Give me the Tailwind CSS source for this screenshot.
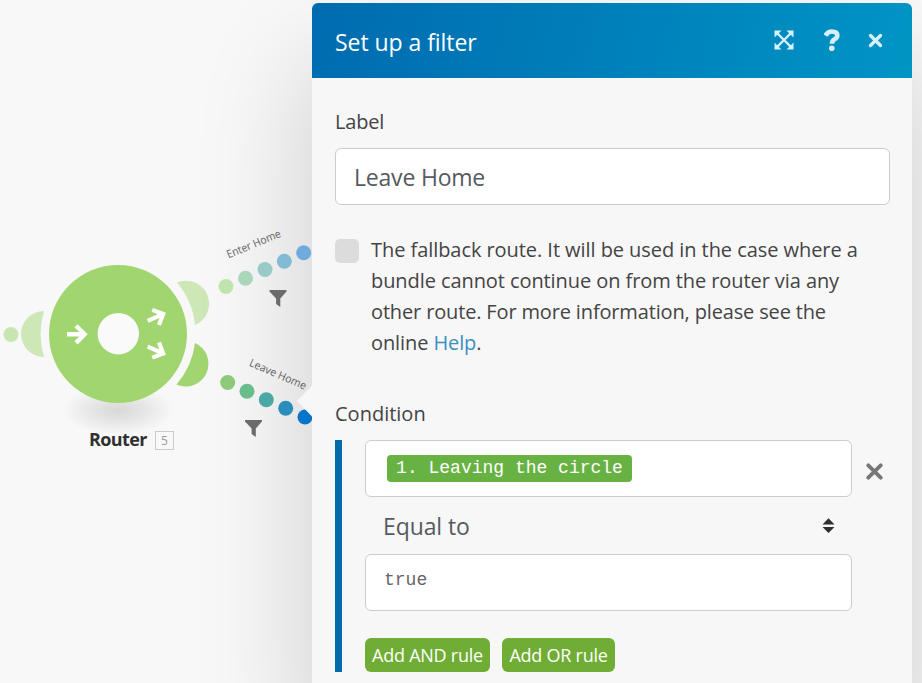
<!DOCTYPE html>
<html lang="en">
<head>
<meta charset="utf-8">
<title>Set up a filter</title>
<script src="https://cdn.jsdelivr.net/npm/@tailwindcss/browser@4"></script>
</head>
<body class="flex h-[683px] w-[922px] overflow-hidden bg-[#f8f8f8] font-['Open_Sans','Noto_Sans',sans-serif] text-[#444]">

<!-- Scenario canvas -->
<section class="h-[683px] w-[312px] shrink-0">
  <svg class="block h-[683px] w-[312px]" viewBox="0 0 312 683">
    <defs>
      <radialGradient id="ground"><stop offset="0" stop-color="#000" stop-opacity=".13"/><stop offset=".5" stop-color="#000" stop-opacity=".07"/><stop offset="1" stop-color="#000" stop-opacity="0"/></radialGradient>
      <g id="arrow" fill="none" stroke="#fff" stroke-width="4.4"><path d="M-10 0H8M-1-8.6L7.6 0L-1 8.6"/></g>
      <path id="funnel" d="M0 0H17V1.5L10.8 8.5V17L6.6 14V8.5L0 1.5Z" fill="#6b6b6b"/>
    </defs>
    <ellipse cx="118" cy="410" rx="56" ry="25" fill="url(#ground)"/>
    <circle cx="11" cy="334.500" r="7.500" fill="#c7e6b0"/>
    <path d="M44 311A23 23 0 0 0 44 357A80 80 0 0 1 44 311Z" fill="#cde7b6"/>
    <path d="M177 282.500A22.500 22.500 0 1 1 195 325A78 78 0 0 0 177 282.500Z" fill="#cde7b6"/>
    <path d="M195 343A22.500 22.500 0 1 1 176.500 384.500A78 78 0 0 0 195 343Z" fill="#a1d570"/>
    <circle cx="118" cy="334" r="69" fill="#a1d570"/>
    <circle cx="118.300" cy="333.700" r="20.700" fill="#fafafa"/>
    <use href="#arrow" transform="translate(77 334.300)"/>
    <use href="#arrow" transform="translate(156.500 317) rotate(-24) scale(.96)"/>
    <use href="#arrow" transform="translate(156.500 350.500) rotate(24) scale(.96)"/>
    <text x="89" y="446" textLength="58.500" font-size="18" font-weight="700" fill="#303030">Router</text>
    <rect x="155.500" y="431.500" width="18" height="18" fill="#f9f9f9" stroke="#ccc"/>
    <text x="164.500" y="444.500" text-anchor="middle" font-size="12" fill="#999">5</text>
  </svg>
</section>

<!-- Filter dialog -->
<main class="relative mt-[3px] flex h-[680px] w-[600px] shrink-0 flex-col rounded-t-lg bg-[#f7f7f7] shadow-[0_65px_110px_8px_rgba(0,0,0,0.155)]">
  <header class="flex h-[75px] shrink-0 items-center rounded-t-[6px] bg-linear-[105deg,#006bb0,#0095c4] pr-[29px] pb-px pl-[23px] text-white">
    <h1 class="mt-[5px] grow text-[23px] tracking-[-0.05px]"><span>Set up a filter</span></h1>
    <svg class="mr-[30px] h-5 w-5" viewBox="0 0 20 20"><path d="M3 3L17 17M17 3L3 17" stroke="#d6effc" stroke-width="2.400"/><path d="M.5 .5H7.500L.5 7.500ZM12.500 .5H19.500V7.500ZM.5 12.500L7.500 19.500H.5ZM19.500 12.500V19.500H12.500Z" fill="#d6effc"/></svg>
    <svg class="mr-[28px] h-[22px] w-4" viewBox="0 0 16 22"><path d="M1.500 6.500Q3.800 2.500 7.800 2.500Q13.300 2.500 13.300 6.500Q13.300 8.800 10.500 10.300Q8 11.700 8 14.800" fill="none" stroke="#d6effc" stroke-width="4.700"/><circle cx="7.800" cy="19.200" r="2.800" fill="#d6effc"/></svg>
    <svg class="h-[15px] w-[15px]" viewBox="0 0 15 15"><path d="M2.500 2.500L12.500 12.500M12.500 2.500L2.500 12.500" stroke="#d6effc" stroke-width="3.400" stroke-linecap="round"/></svg>
  </header>

  <div class="flex flex-col px-[23px] pt-[28px]">
    <label class="text-[20px] leading-[31px] tracking-[-0.2px]"><span>Label</span></label>
    <div class="mt-[11px] flex h-[57px] w-[555px] items-center rounded-md border border-[#ccc] bg-white px-[18px] text-[23px] text-[#555a5f]"><span class="mt-px tracking-[-0.2px]">Leave Home</span></div>

    <div class="mt-[29px] flex">
      <div class="mt-[5px] mr-3 h-6 w-6 shrink-0 rounded-[5px] bg-[#dcdcdc]"></div>
      <p class="text-[20px] leading-[31px] whitespace-nowrap"><span class="tracking-[-0.06px]">The fallback route. It will be used in the case where a</span><br><span class="tracking-[-0.08px]">bundle cannot continue on from the router via any</span><br><span class="tracking-[-0.15px]">other route. For more information, please see the</span><br><span class="tracking-[-0.1px]">online <a class="text-[#3a8fc4]">Help</a>.</span></p>
    </div>

    <h2 class="mt-[40px] text-[20px] leading-[31px]"><span>Condition</span></h2>
    <div class="mt-[11px] flex h-[232px] border-l-[7px] border-[#006cab] pl-[23px]">
      <div class="flex w-[487px] flex-col">
        <div class="flex h-[57px] rounded-md border border-[#ccc] bg-white pt-[14px] pl-[21px]">
          <span class="flex h-[27px] w-[245px] items-center justify-center rounded-[4px] bg-[#68b244] font-['Liberation_Mono',monospace] text-[18px] text-white">1. Leaving the circle</span>
        </div>
        <div class="flex h-[57px] items-center justify-between pr-[17px] pl-[18px] text-[23px] text-[#555a5f]"><span class="mt-px tracking-[-0.1px]">Equal to</span>
          <svg class="h-[15px] w-[13px]" viewBox="0 0 13 15"><path d="M.5 6.500L6.500 .3L12.500 6.500ZM.5 9H12.500L6.500 15Z" fill="#303030"/></svg>
        </div>
        <div class="h-[57px] rounded-md border border-[#ccc] bg-white pt-[14px] pl-[18px] font-['Liberation_Mono',monospace] text-[18px] leading-[22px] text-[#666]">true</div>
        <div class="mt-[27px] flex gap-3 text-[18px] tracking-[-0.25px] text-white">
          <button class="h-[34px] w-[125px] rounded-md bg-[#70ad34] whitespace-nowrap"><span>Add AND rule</span></button>
          <button class="h-[34px] w-[113px] rounded-md bg-[#70ad34] whitespace-nowrap"><span>Add OR rule</span></button>
        </div>
      </div>
      <svg class="mt-[23px] ml-[13.500px] h-[17px] w-[17px] shrink-0" viewBox="0 0 17 17"><path d="M2.300 2.300L14.700 14.700M14.700 2.300L2.300 14.700" stroke="#777" stroke-width="3.800" stroke-linecap="round"/></svg>
    </div>
  </div>

  <!-- Routes lie over the dialog's shadow, the pointer over the routes -->
  <svg class="absolute top-[197px] -left-[112px] h-[260px] w-[112px]" viewBox="200 200 112 260">
    <circle cx="226" cy="286.500" r="7.500" fill="#c1e4ae"/>
    <circle cx="245.500" cy="278.300" r="7.500" fill="#acd6ba"/>
    <circle cx="265" cy="269.500" r="7.500" fill="#99cac8"/>
    <circle cx="284.300" cy="261.300" r="7.500" fill="#82bcd4"/>
    <circle cx="303.700" cy="252.700" r="7.500" fill="#70abdd"/>
    <circle cx="227.700" cy="382.500" r="7.500" fill="#8cca78"/>
    <circle cx="247" cy="391.200" r="7.500" fill="#68bd8d"/>
    <circle cx="266.300" cy="399.700" r="7.500" fill="#4ba8a6"/>
    <circle cx="285.700" cy="408.300" r="7.500" fill="#298eb9"/>
    <circle cx="305" cy="417" r="7.500" fill="#0776c9"/>
    <use href="#funnel" x="269.500" y="290"/>
    <use href="#funnel" x="245" y="420"/>
    <text transform="translate(228.500 258.500) rotate(-22.500)" textLength="57.500" lengthAdjust="spacingAndGlyphs" font-size="11" fill="#606060">Enter Home</text>
    <text transform="translate(248.500 365.500) rotate(23.500)" textLength="61" lengthAdjust="spacingAndGlyphs" font-size="11" fill="#606060">Leave Home</text>
    <path d="M312 385.500L297 401L312 416.500Z" fill="#f7f7f7"/>
  </svg>
</main>
</body>
</html>
